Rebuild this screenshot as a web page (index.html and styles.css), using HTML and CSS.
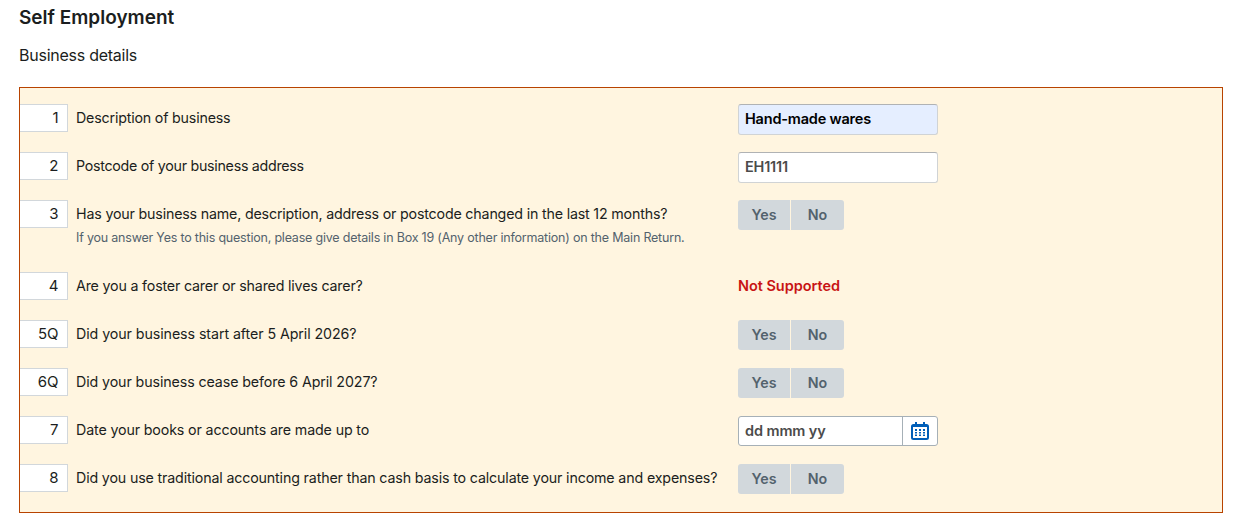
FILE: index.html
```
<!DOCTYPE html>
<html lang="en">
<head>
<meta charset="utf-8">
<title>Self Employment</title>
<link rel="stylesheet" href="styles.css">
</head>
<body>
<main class="page">
  <h1 class="title">Self Employment</h1>
  <h2 class="subtitle">Business details</h2>
  <form class="panel">
    <div class="row">
      <span class="num">1</span>
      <div class="question"><span class="label l1">Description of business</span></div>
      <div class="answer"><div class="field filled"><span class="v1">Hand-made wares</span></div></div>
    </div>
    <div class="row">
      <span class="num">2</span>
      <div class="question"><span class="label l2">Postcode of your business address</span></div>
      <div class="answer"><div class="field"><span class="v2">EH1111</span></div></div>
    </div>
    <div class="row tall">
      <span class="num">3</span>
      <div class="question"><span class="label l3">Has your business name, description, address or postcode changed in the last 12 months?</span><span class="hint">If you answer Yes to this question, please give details in Box 19 (Any other information) on the Main Return.</span></div>
      <div class="answer toggle"><button type="button" class="yes">Yes</button><button type="button" class="no">No</button></div>
    </div>
    <div class="row">
      <span class="num">4</span>
      <div class="question"><span class="label l4">Are you a foster carer or shared lives carer?</span></div>
      <div class="answer"><span class="unsupported">Not Supported</span></div>
    </div>
    <div class="row">
      <span class="num">5Q</span>
      <div class="question"><span class="label l5">Did your business start after 5 April 2026?</span></div>
      <div class="answer toggle"><button type="button" class="yes">Yes</button><button type="button" class="no">No</button></div>
    </div>
    <div class="row">
      <span class="num">6Q</span>
      <div class="question"><span class="label l6">Did your business cease before 6 April 2027?</span></div>
      <div class="answer toggle"><button type="button" class="yes">Yes</button><button type="button" class="no">No</button></div>
    </div>
    <div class="row">
      <span class="num">7</span>
      <div class="question"><span class="label l7">Date your books or accounts are made up to</span></div>
      <div class="answer"><div class="field date"><span class="v3">dd mmm yy</span><span class="picker"><svg width="18" height="18" viewBox="0 0 18 18" fill="#005eb8"><path fill-rule="evenodd" d="M2.500 2H4V0h2v2h6V0h2v2h1.500A2.500 2.500 0 0 1 18 4.500v11a2.500 2.500 0 0 1-2.500 2.500h-13A2.500 2.500 0 0 1 0 15.500v-11A2.500 2.500 0 0 1 2.500 2zM2 5v10.500q0 .5.5.5h13q.5 0 .5-.5V5z"/><path d="M4 7h2v2H4zm4 0h2v2H8zm4 0h2v2h-2zM4 10h2v1.500H4zm4 0h2v1.500H8zm4 0h2v1.500h-2zM4 12.500h2V14H4zm4 0h2V14H8zm4 0h2V14h-2z"/></svg></span></div></div>
    </div>
    <div class="row">
      <span class="num">8</span>
      <div class="question"><span class="label l8">Did you use traditional accounting rather than cash basis to calculate your income and expenses?</span></div>
      <div class="answer toggle"><button type="button" class="yes">Yes</button><button type="button" class="no">No</button></div>
    </div>
  </form>
</main>
</body>
</html>
```
FILE: styles.css
```
* { box-sizing: border-box; }
body {
  margin: 0;
  background: #fff;
  color: #1b1e20;
  font-family: Inter, "Liberation Sans", sans-serif;
  font-size: 15px;
}
.page { padding: 6px 25px 0 19px; }
.title { margin: 0; font-size: 19px; line-height: 24px; font-weight: 600; }
.subtitle { margin: 13px 0 0; font-size: 16px; line-height: 24px; font-weight: 400; letter-spacing: -0.25px; }
.panel {
  margin-top: 20px;
  padding-top: 16px;
  background: #fff5e0;
  border: 1px solid #b84300;
}
.row { display: grid; grid-template-columns: 48px 670px 200px; height: 48px; align-items: start; }
.tall { height: 72px; }
.num {
  height: 28px;
  padding-right: 8.5px;
  border: 1px solid #d2d7db;
  border-left: 0;
  background: #fff;
  line-height: 26px;
  text-align: right;
}
.question { display: flex; flex-direction: column; align-items: flex-start; padding-left: 8px; white-space: nowrap; }
.label { line-height: 28px; font-size: 14.25px; }
.l1 { letter-spacing: -0.19px; }
.l2 { letter-spacing: -0.28px; }
.l3 { letter-spacing: -0.186px; }
.l4 { letter-spacing: -0.187px; }
.l5 { letter-spacing: -0.085px; }
.l6 { letter-spacing: -0.11px; }
.l7 { letter-spacing: -0.144px; }
.l8 { letter-spacing: -0.158px; }
.hint { font-size: 12.5px; line-height: 20px; letter-spacing: -0.205px; color: #53626d; }
.field {
  display: flex;
  align-items: center;
  width: 200px;
  height: 31px;
  padding-left: 6px;
  border: 1px solid #d0d3d5;
  border-top-color: #b0b2b4;
  border-radius: 3px;
  background: #fff;
  color: #4b4b4b;
  font-size: 14.5px;
  font-weight: 600;
  line-height: 18px;
}
.v1, .v2 { padding-bottom: 2px; letter-spacing: -0.2px; }
.v3 { letter-spacing: -0.1px; }
.filled { background: #e5eeff; color: #000; }
.date { height: 30px; border-color: #a6b0b7; justify-content: space-between; }
.picker {
  display: flex;
  align-items: center;
  justify-content: center;
  width: 35px;
  height: 28px;
  border-left: 1px solid #a6b0b7;
}
.toggle { display: flex; gap: 1px; }
.toggle button {
  height: 30px;
  padding: 0;
  border: 0;
  background: #d2d8dc;
  color: #53626d;
  font: 600 14.25px/30px Inter, "Liberation Sans", sans-serif;
}
.toggle .yes { width: 52px; border-radius: 3px 0 0 3px; }
.toggle .no { width: 53px; border-radius: 0 3px 3px 0; }
.unsupported { line-height: 28px; font-size: 14.5px; font-weight: 600; letter-spacing: -0.04px; color: #c81414; }
```
